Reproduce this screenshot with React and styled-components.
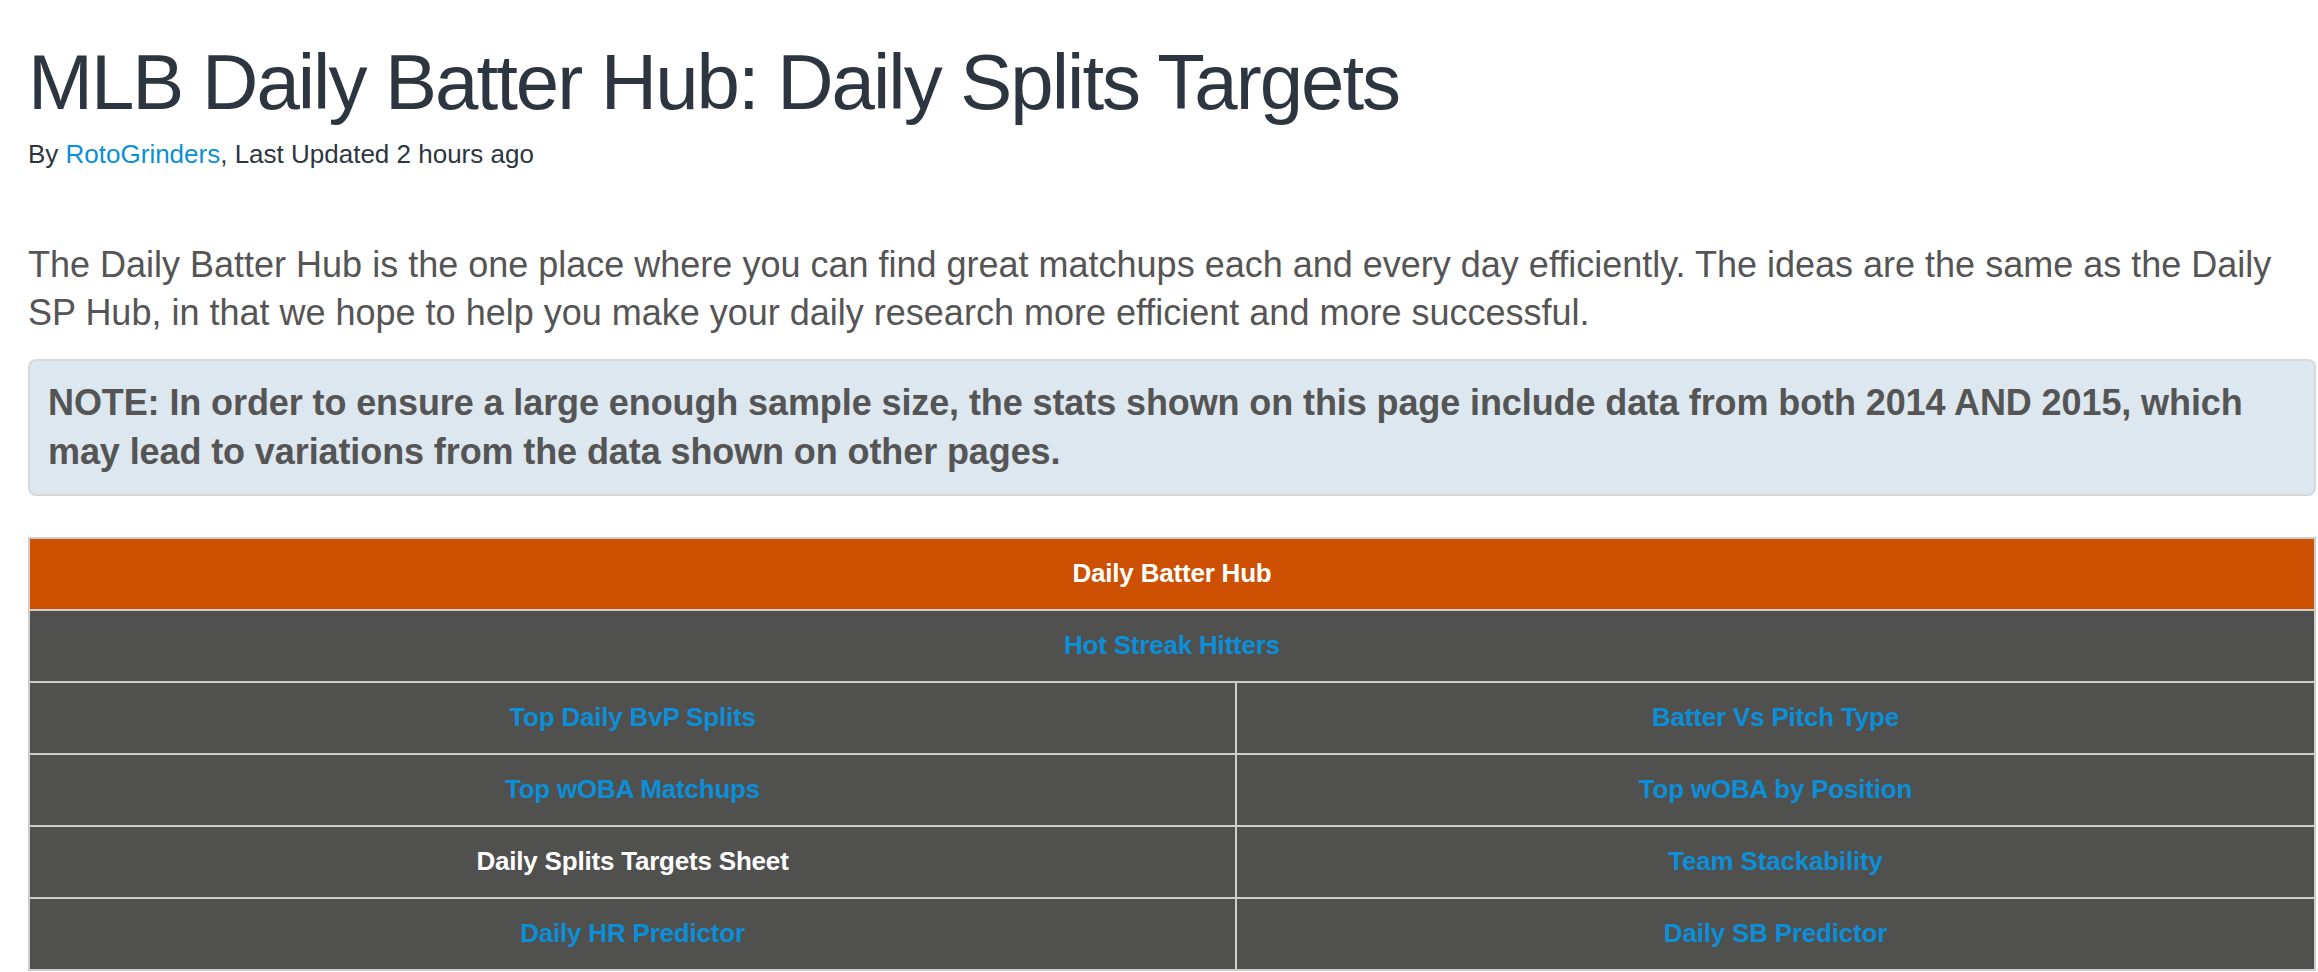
import React from 'react';
import styled, { createGlobalStyle } from 'styled-components';

const GlobalStyle = createGlobalStyle`
  body {
    margin: 0;
    background: #fff;
    font-family: "Liberation Sans", Arial, Helvetica, sans-serif;
  }
`;

const Page = styled.div`
  padding: 0 2px 0 28px;
`;

const Title = styled.h1`
  margin: 40px 0 8px;
  font-size: 78px;
  font-weight: 300;
  letter-spacing: -2px;
  line-height: 1.1;
  color: #2d3640;
`;

const Byline = styled.div`
  font-size: 26px;
  line-height: 40px;
  color: #2d3640;
`;

const Link = styled.a`
  color: #0b8fd8;
  text-decoration: none;
`;

const Intro = styled.p`
  margin: 67px 0 0;
  font-size: 36px;
  line-height: 48px;
  color: #555;
`;

const Note = styled.div`
  margin-top: 22px;
  padding: 17px 18px 18px;
  border: 2px solid #d6d9dc;
  border-radius: 8px;
  background: #dce7f0;
  font-size: 36px;
  font-weight: bold;
  letter-spacing: -0.1px;
  line-height: 49px;
  color: #555;
`;

const HubTable = styled.div`
  margin-top: 41px;
  display: grid;
  grid-template-columns: 1205fr 1077fr;
  grid-auto-rows: 70px;
  gap: 2px;
  padding: 2px;
  background: #cdcdcd;
`;

const Cell = styled.div`
  grid-column: ${p => (p.wide ? '1 / -1' : 'auto')};
  display: flex;
  align-items: center;
  justify-content: center;
  background: ${p => (p.head ? '#cc5000' : '#50504f')};
  font-size: 26px;
  font-weight: bold;
  letter-spacing: -0.2px;
  color: #fff;
`;

const CellLink = styled.a`
  color: #0b8fd8;
  text-decoration: none;
`;

const rows = [
  ['Top Daily BvP Splits', 'Batter Vs Pitch Type'],
  ['Top wOBA Matchups', 'Top wOBA by Position'],
  ['Daily Splits Targets Sheet', 'Team Stackability'],
  ['Daily HR Predictor', 'Daily SB Predictor'],
];

const current = 'Daily Splits Targets Sheet';

export default function App() {
  return (
    <Page>
      <GlobalStyle />
      <Title>MLB Daily Batter Hub: Daily Splits Targets</Title>
      <Byline>
        By <Link href="#">RotoGrinders</Link>, Last Updated 2 hours ago
      </Byline>
      <Intro>
        The Daily Batter Hub is the one place where you can find great matchups each and every day
        efficiently. The ideas are the same as the Daily SP Hub, in that we hope to help you make
        your daily research more efficient and more successful.
      </Intro>
      <Note>
        NOTE: In order to ensure a large enough sample size, the stats shown on this page include
        data from both 2014 AND 2015, which may lead to variations from the data shown on other
        pages.
      </Note>
      <HubTable>
        <Cell wide head>Daily Batter Hub</Cell>
        <Cell wide>
          <CellLink href="#">Hot Streak Hitters</CellLink>
        </Cell>
        {rows.flat().map(name => (
          <Cell key={name}>
            {name === current ? name : <CellLink href="#">{name}</CellLink>}
          </Cell>
        ))}
      </HubTable>
    </Page>
  );
}
